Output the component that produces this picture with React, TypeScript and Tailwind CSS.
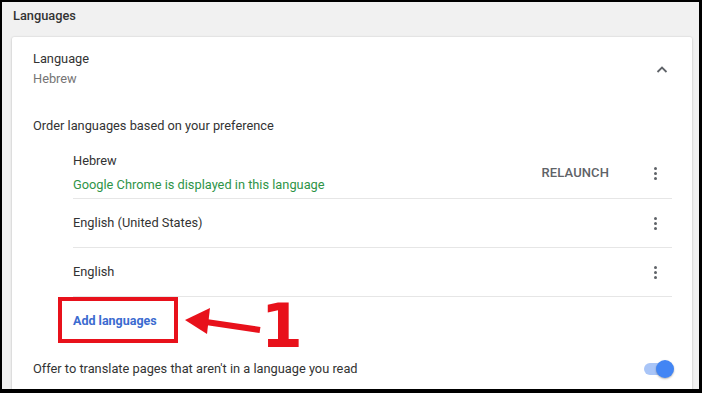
import React from 'react';

// Chrome 设置页 - 语言卡片（带红色标注）
function Dots() {
  return (
    <div className="flex w-[20px] flex-col items-center gap-[2px]">
      <span className="h-[3px] w-[3px] rounded-full bg-[#5f6368]" />
      <span className="h-[3px] w-[3px] rounded-full bg-[#5f6368]" />
      <span className="h-[3px] w-[3px] rounded-full bg-[#5f6368]" />
    </div>
  );
}

function LangRow({ name, sub, action }: { name: string; sub?: string; action?: string }) {
  return (
    <div
      className={
        sub
          ? 'flex items-center border-b border-[#e6e6e6] pt-[13px] pb-[1px]'
          : 'flex h-[49px] items-center border-b border-[#e6e6e6]'
      }
    >
      <div className="flex-1">
        <div className={sub ? 'leading-[24px]' : 'leading-[20px]'}>{name}</div>
        {sub && <div className="leading-[24px] text-[#2f9448]">{sub}</div>}
      </div>
      {action && (
        <div className="mr-[36px] text-[13px] font-medium tracking-[0.1px] text-[#5f6368]">{action}</div>
      )}
      <div className="mr-[7px]">
        <Dots />
      </div>
    </div>
  );
}

export default function App() {
  return (
    <div
      className="relative h-[393px] w-[702px] overflow-hidden border-t-2 border-r-[3px] border-b-[4px] border-l-2 border-black bg-[#f1f1f1] text-[12.8px] text-[#333]"
      style={{ fontFamily: 'Roboto, "Liberation Sans", sans-serif' }}
    >
      {/* 标题 */}
      <div className="pt-[6px] pl-[11px] font-medium leading-[16px] text-[#333]">Languages</div>

      {/* 卡片 */}
      <div className="mt-[13px] mr-[7px] ml-[10px] h-[400px] rounded-t-[2px] bg-white shadow-[0_0_2px_rgba(0,0,0,0.14),0_1px_3px_rgba(0,0,0,0.12)]">
        <div className="flex items-start pt-[12px] pr-[22px] pl-[21px]">
          <div className="flex-1">
            <div className="leading-[20px]">Language</div>
            <div className="leading-[20px] text-[#757575]">Hebrew</div>
          </div>
          <svg width="16" height="16" viewBox="0 0 16 16" className="mt-[13px]">
            <path d="M3.5 10 L8 5.5 L12.5 10" fill="none" stroke="#5f6368" strokeWidth="1.8" />
          </svg>
        </div>

        <div className="mt-[27px] pl-[21px] leading-[20px]">Order languages based on your preference</div>

        <div className="mr-[20px] ml-[61px]">
          <LangRow name="Hebrew" sub="Google Chrome is displayed in this language" action="RELAUNCH" />
          <LangRow name="English (United States)" />
          <LangRow name="English" />
          <div className="flex h-[48px] items-center font-bold text-[12.5px] text-[#3b6bd0]">Add languages</div>
        </div>

        <div className="flex h-[48px] items-center pr-[21px] pl-[21px]">
          <div className="flex-1">Offer to translate pages that aren't in a language you read</div>
          <div className="relative h-[12px] w-[27px] rounded-full bg-[#a9c5f7]">
            <span className="absolute top-[-3px] right-[-3px] h-[18px] w-[18px] rounded-full bg-[#4285f4] shadow-[0_1px_2px_rgba(0,0,0,0.3)]" />
          </div>
        </div>
      </div>

      {/* 红色标注 */}
      <div className="absolute top-[295px] left-[56px] h-[46px] w-[120px] border-[4px] border-[#e8111b]" />
      <svg className="absolute top-[300px] left-[180px]" width="90" height="40" viewBox="0 0 90 40">
        <polygon points="3,18 28,6 25,32" fill="#e8111b" />
        <line x1="24" y1="20" x2="78" y2="28" stroke="#e8111b" strokeWidth="6" />
      </svg>
      <div
        className="absolute top-[288px] left-[259px] text-[60px] font-bold leading-[72px] text-[#e8111b]"
        style={{ fontFamily: '"DejaVu Sans", sans-serif' }}
      >
        1
      </div>
    </div>
  );
}
